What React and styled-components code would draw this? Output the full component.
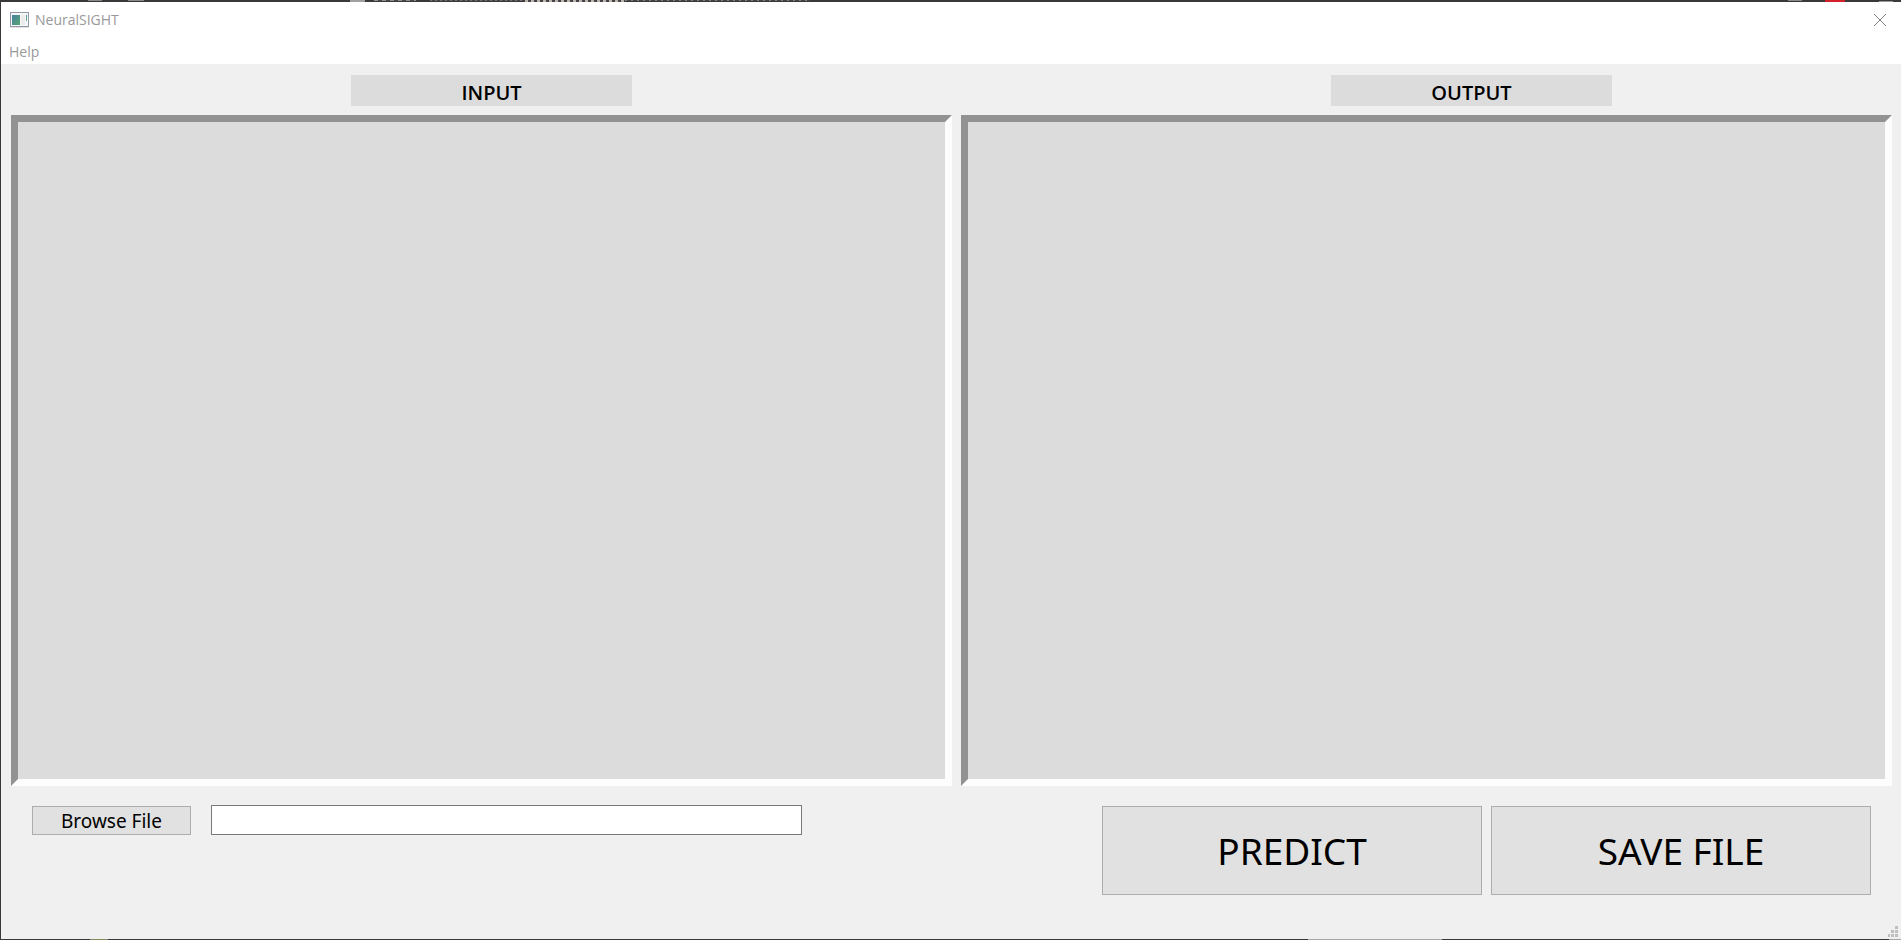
import React from "react";
import styled, { createGlobalStyle } from "styled-components";

const GlobalStyle = createGlobalStyle`
  *, *::before, *::after { box-sizing: border-box; }
  body { margin: 0; background: #f0f0f0; }
  button, input { font: inherit; color: inherit; margin: 0; border-radius: 0; }
`;

const Window = styled.div`
  display: flex;
  flex-direction: column;
  min-height: 100vh;
  border-left: 1px solid #3a383a;
  background: #f0f0f0;
  color: #000;
  font-family: "Noto Sans", sans-serif;
`;

const DesktopEdge = styled.div`
  flex: none;
  height: ${(p) => p.$size}px;
  margin-left: -1px;
  background: ${(p) => p.$marks} #3a383a;
`;

const TopBars = styled.header`
  background: #fff;
  color: #999;
  font-family: "Open Sans", sans-serif;
  font-size: 14px;
  line-height: 20px;
`;

const TitleBar = styled.div`
  display: flex;
  align-items: center;
  height: 36px;
  padding: 0 14px 0 9px;
`;

const Title = styled.h1`
  flex: 1;
  margin: 0 0 0 6px;
  font: inherit;
`;

const CloseButton = styled.button`
  display: flex;
  padding: 0;
  border: 0;
  background: none;
`;

const MenuBar = styled.nav`
  display: flex;
  height: 26px;
  padding: 4px 8px 0;
`;

const MenuButton = styled.button`
  height: 20px;
  padding: 0;
  border: 0;
  background: none;
`;

const Content = styled.main`
  flex: 1;
  display: flex;
  flex-direction: column;
  padding: 11px 9px 44px 10px;
`;

const Headings = styled.div`
  display: grid;
  grid-template-columns: 340fr 281px 699fr 281px 280fr;
`;

const Heading = styled.h2`
  grid-column: ${(p) => p.$column};
  margin: 0;
  height: 31px;
  padding-top: 4px;
  background: #dcdcdc;
  font-family: "Open Sans", sans-serif;
  font-size: 20px;
  font-weight: 600;
  line-height: 28px;
  text-align: center;
`;

const Views = styled.div`
  flex: 1;
  display: grid;
  grid-template-columns: 941fr 931fr;
  gap: 9px;
  margin-top: 9px;
`;

const View = styled.section`
  border: 7px solid;
  border-color: #929292 #fdfdfd #fdfdfd #929292;
  background: #dcdcdc;
`;

const Controls = styled.div`
  display: flex;
  align-items: flex-start;
  padding: 19px 21px 0;
`;

const PushButton = styled.button`
  width: ${(p) => (p.$large ? 380 : 159)}px;
  height: ${(p) => (p.$large ? 89 : 29)}px;
  padding: ${(p) => (p.$large ? 0 : 2)}px 0 0;
  border: 1px solid #adadad;
  background: #e1e1e1;
  font-size: ${(p) => (p.$large ? 37 : 19)}px;
  line-height: ${(p) => (p.$large ? 48 : 25)}px;
`;

const FileGroup = styled.div`
  display: flex;
  align-items: flex-end;
  gap: 20px;
`;

const PathInput = styled.input`
  width: 591px;
  height: 30px;
  padding: 0 6px;
  border: 1px solid #7a7a7a;
  background: #fff;
  font-size: 19px;
`;

const Actions = styled.div`
  display: flex;
  gap: 9px;
  margin: 1px 0 0 auto;
`;

const SizeGrip = styled.svg`
  position: absolute;
  right: 3px;
  bottom: 2px;
`;

const StatusArea = styled.div`
  position: relative;
  flex: none;
`;

const topMarks = `
  linear-gradient(#8a898a, #8a898a) 88px 0 / 14px 1px no-repeat,
  linear-gradient(#8a898a, #8a898a) 128px 0 / 16px 1px no-repeat,
  linear-gradient(#a0a0a0, #a0a0a0) 350px 0 / 15px 2px no-repeat,
  repeating-linear-gradient(90deg, #8f8f8f 0 4px, #4a484a 4px 8px) 374px 0 / 42px 1px no-repeat,
  repeating-linear-gradient(90deg, #74706e 0 2px, #454345 2px 5px) 430px 0 / 95px 1px no-repeat,
  repeating-linear-gradient(90deg, #b8b4ac 0 3px, #454345 3px 6px) 525px 0 / 100px 2px no-repeat,
  repeating-linear-gradient(90deg, #827e7a 0 2px, #454345 2px 6px) 625px 0 / 185px 1px no-repeat,
  linear-gradient(#8a898a, #8a898a) 1788px 0 / 14px 1px no-repeat,
  linear-gradient(#d3202b, #d3202b) 1825px 0 / 20px 2px no-repeat,
  linear-gradient(#9a999a, #9a999a) 1879px 1px / 14px 1px no-repeat,`;

const bottomMarks = `
  linear-gradient(#858a62, #858a62) 90px 0 / 18px 1px no-repeat,
  linear-gradient(#a5a5a5, #a5a5a5) 1308px 0 / 134px 1px no-repeat,
  linear-gradient(#a5a5a5, #a5a5a5) 100% 0 / 12px 1px no-repeat,`;

function AppIcon() {
  return (
    <svg width="19" height="16" viewBox="0 0 19 16" aria-hidden="true">
      <defs>
        <linearGradient id="screen" x1="0" y1="0" x2="1" y2="1">
          <stop offset="0" stopColor="#4b7fa0" />
          <stop offset="1" stopColor="#55a672" />
        </linearGradient>
        <linearGradient id="bar" x1="0" y1="0" x2="0" y2="1">
          <stop offset="0" stopColor="#4b8fa5" />
          <stop offset="1" stopColor="#6bb27a" />
        </linearGradient>
      </defs>
      <path d="M0 15.5h19" stroke="#dfe1e5" />
      <rect x="0.5" y="0.5" width="18" height="14" fill="#f6f7f8" stroke="#9298a8" />
      <rect x="2" y="3" width="8" height="10" fill="url(#screen)" />
      <rect x="11" y="3" width="4" height="10" fill="#ececec" />
      <rect x="16" y="3" width="1" height="6" fill="url(#bar)" />
    </svg>
  );
}

function CloseIcon() {
  return (
    <svg width="14" height="14" viewBox="0 0 14 14" aria-hidden="true">
      <path d="M1 1l12 12M13 1L1 13" stroke="#7d7d7d" strokeWidth="1" fill="none" />
    </svg>
  );
}

const gripDots = [[7, 0], [3, 4], [7, 4], [0, 8], [3, 8], [7, 8]];

export default function App() {
  return (
    <>
      <GlobalStyle />
      <Window>
        <DesktopEdge $size={2} $marks={topMarks} />
        <TopBars>
          <TitleBar>
            <AppIcon />
            <Title>NeuralSIGHT</Title>
            <CloseButton aria-label="Close"><CloseIcon /></CloseButton>
          </TitleBar>
          <MenuBar>
            <MenuButton>Help</MenuButton>
          </MenuBar>
        </TopBars>
        <Content>
          <Headings>
            <Heading id="input-title" $column={2}>INPUT</Heading>
            <Heading id="output-title" $column={4}>OUTPUT</Heading>
          </Headings>
          <Views>
            <View aria-labelledby="input-title" />
            <View aria-labelledby="output-title" />
          </Views>
          <Controls>
            <FileGroup>
              <PushButton>Browse File</PushButton>
              <PathInput type="text" aria-label="File path" />
            </FileGroup>
            <Actions>
              <PushButton $large>PREDICT</PushButton>
              <PushButton $large>SAVE FILE</PushButton>
            </Actions>
          </Controls>
        </Content>
        <StatusArea>
          <SizeGrip width="10" height="11" viewBox="0 0 10 11" aria-hidden="true">
            {gripDots.map(([x, y]) => (
              <rect key={`${x}-${y}`} x={x} y={y} width={x ? 3 : 2} height="3" fill="#bfbfbf" />
            ))}
          </SizeGrip>
        </StatusArea>
        <DesktopEdge $size={1} $marks={bottomMarks} />
      </Window>
    </>
  );
}
